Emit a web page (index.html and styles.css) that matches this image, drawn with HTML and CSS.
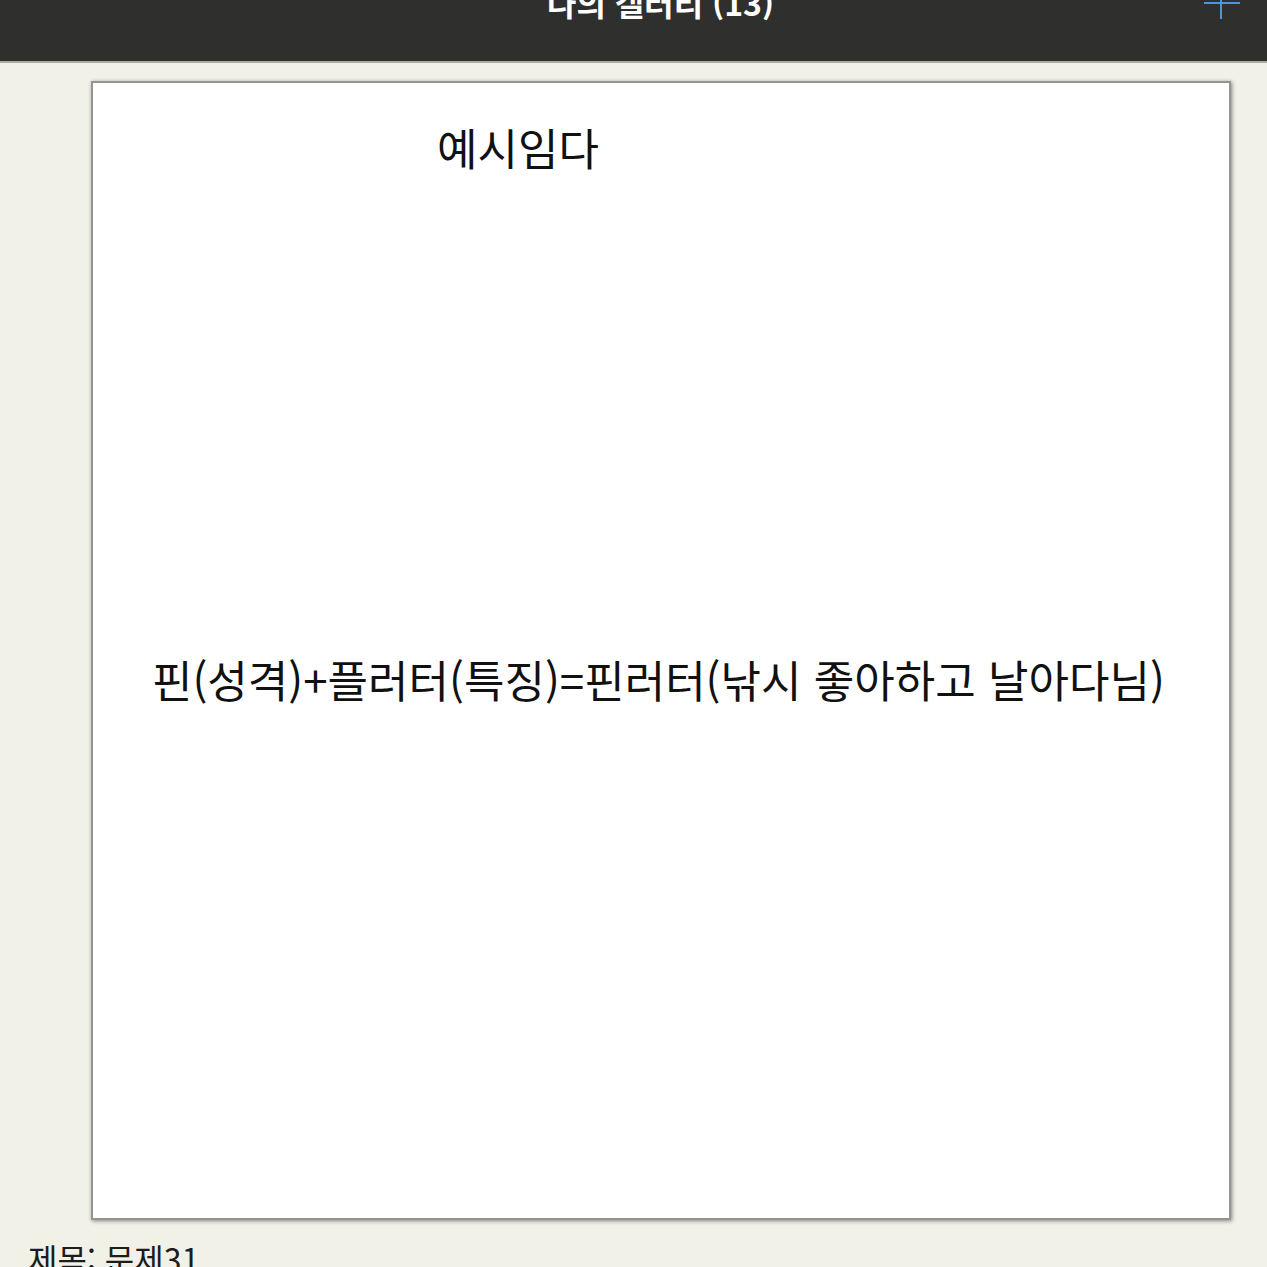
FILE: index.html
```html
<!DOCTYPE html>
<html lang="ko">
<head>
<meta charset="utf-8">
<title>나의 갤러리</title>
<link rel="stylesheet" href="styles.css">
</head>
<body>
<header class="topbar">
  <h1 class="topbar-title">나의 갤러리 (13)</h1>
  <button class="add-btn" aria-label="추가">
    <svg width="36" height="22" viewBox="0 0 36 22"><path d="M0 3H36M17 0V19" stroke="#4f95dc" stroke-width="2" fill="none"/></svg>
  </button>
</header>
<main class="gallery">
  <div class="card">
    <div class="canvas">
      <span class="note note-top">예시임다</span>
      <span class="note note-mid">핀(성격)+플러터(특징)=핀러터(낚시 좋아하고 날아다님)</span>
    </div>
  </div>
  <p class="caption">제목: 문제31</p>
</main>
</body>
</html>
```

FILE: styles.css
```css
html, body {
  margin: 0;
  padding: 0;
  background: #f2f1e8;
  font-family: "Noto Sans CJK KR", "Noto Sans", sans-serif;
  overflow: hidden;
}

.topbar {
  position: relative;
  height: 61px;
  background: #2f2f2d;
  border-bottom: 2px solid #acaca4;
  display: flex;
  justify-content: center;
  padding-left: 54px;
}

.topbar-title {
  margin: -20px 0 0 0;
  font-size: 32px;
  font-weight: 700;
  line-height: 44px;
  color: #ffffff;
}

.add-btn {
  position: absolute;
  top: 0;
  right: 27px;
  width: 36px;
  height: 22px;
  padding: 0;
  border: 0;
  background: none;
}

.add-btn svg {
  display: block;
}

.gallery {
  padding: 18px 0 0 91px;
}

.card {
  width: 1136px;
  height: 1135px;
  border: 2px solid #95958f;
  background: #ffffff;
  box-shadow: 1px 1px 4px rgba(0, 0, 0, 0.45);
}

.canvas {
  position: relative;
  width: 100%;
  height: 100%;
}

.note {
  position: absolute;
  font-size: 44px;
  line-height: 1;
  color: #111;
  white-space: nowrap;
}

.note-top {
  left: 344px;
  top: 42px;
}

.note-mid {
  left: 59px;
  top: 574px;
}

.caption {
  margin: 22px 0 0 -63px;
  font-size: 32px;
  line-height: 1;
  color: #1c1c1c;
}
```
